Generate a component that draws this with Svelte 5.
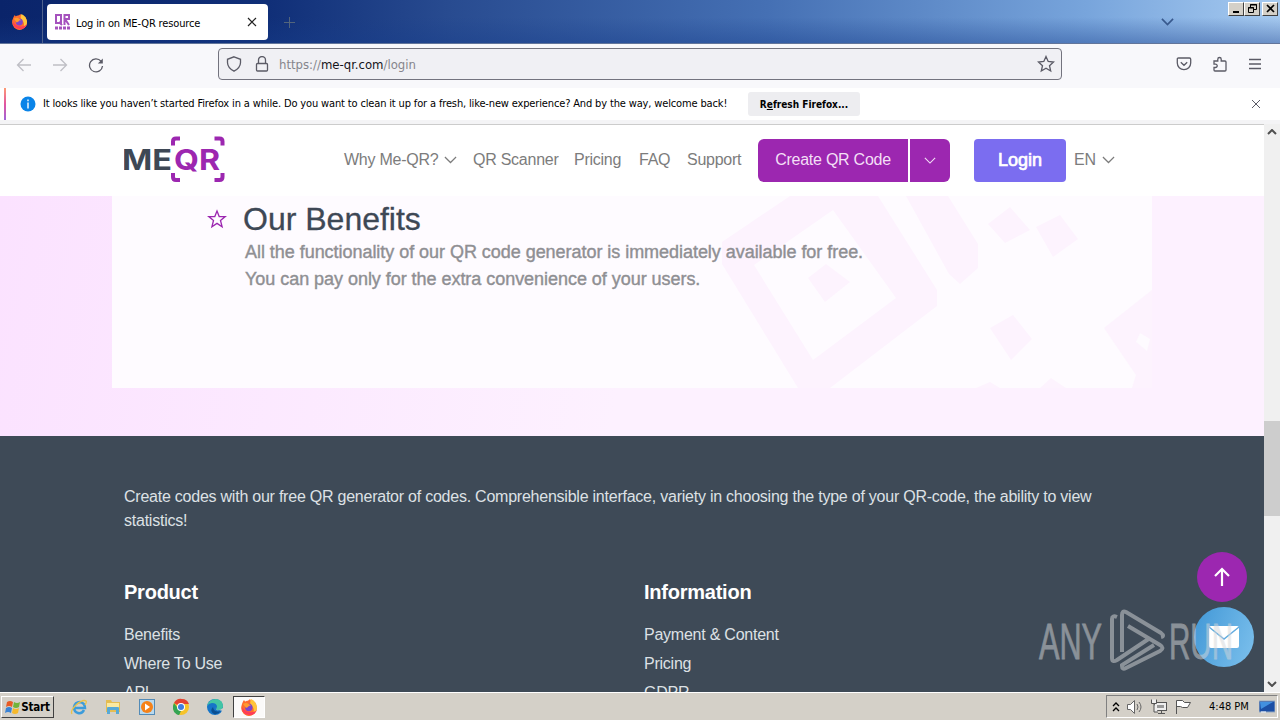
<script lang="ts">
    const navLinks = ['QR Scanner', 'Pricing', 'FAQ', 'Support']
    const productLinks = ['Benefits', 'Where To Use', 'API']
    const infoLinks = ['Payment & Content', 'Pricing', 'GDPR']
</script>

{#snippet chevron(size: number)}
    <svg class="chevron" width={size} height={size / 2 + 1} viewBox="0 0 14 8"><path d="M1 1l6 6 6-6" /></svg>
{/snippet}

{#snippet firefox(size: number)}
    <svg width={size} height={size} viewBox="0 0 18 18">
        <circle cx="9" cy="10" r="7.6" fill="#ff7139" />
        <path d="M2 6Q3 3 4 2l2 3 4-4q1 3 4 5l1-2q4 8-1 12-5 4-10 0-4-4-2-10z" fill="#ff6b2c" />
        <path d="M11 1q5 2 6 8 0 5-4 7 2-5-1-8-3-2-1-7z" fill="#ffc53a" />
        <path d="M2 9q0 8 8 8 5 0 7-5-3 3-7 2-5 0-8-5z" fill="#ff3b58" />
        <circle cx="8.8" cy="9.5" r="3.7" fill="#7c45cc" />
        <path d="M3 6q3-2 6 0l2 2q-2-1-3 1l-2 1z" fill="#ff9a2e" />
    </svg>
{/snippet}

<div class="screen">
    <header class="titlebar">
        <div class="pinned">{@render firefox(17)}</div>
        <div class="tab">
            <svg width="16" height="16" viewBox="0 0 16 16" fill="none" stroke="#a552bd" stroke-width="2">
                <path d="M1 1h5v8H1zM4 8l3 3M9.500 11V1H14v4h-4l4 6" />
                <path d="M0 14h16" stroke-width="3" stroke-dasharray="3 1" />
            </svg>
            <span>Log in on ME-QR resource</span>
            <svg class="tab-close" width="10" height="10" viewBox="0 0 10 10"><path d="M1 1l8 8M9 1L1 9" stroke="#222" stroke-width="1.200" /></svg>
        </div>
        <svg class="new-tab" width="13" height="13" viewBox="0 0 13 13"><path d="M6.500 1v11M1 6.500h11" stroke="#53657c" /></svg>
        <div class="list-tabs">{@render chevron(13)}</div>
        <div class="win-buttons">
            <button aria-label="Minimize"><svg width="11" height="10"><path d="M2 8h6" stroke="#000" stroke-width="2" /></svg></button>
            <button aria-label="Restore"><svg width="11" height="10" fill="none" stroke="#000"><path d="M3.500 3V.5h6v5H7M3 1h7M1.500 3.500h5v5h-5zM1 4h6" /></svg></button>
            <button class="close" aria-label="Close"><svg width="11" height="10"><path d="M2 1l7 7M9 1L2 8" stroke="#000" stroke-width="1.700" /></svg></button>
        </div>
    </header>

    <div class="toolbar">
        <div class="history">
            <svg class="dim" width="16" height="16" viewBox="0 0 16 16"><path d="M15 8H1.500M7.500 2l-6 6 6 6" /></svg>
            <svg class="dim" width="16" height="16" viewBox="0 0 16 16"><path d="M1 8h13.500M8.500 2l6 6-6 6" /></svg>
            <svg width="16" height="16" viewBox="0 0 16 16"><path d="M13 4.200A6.500 6.500 0 1 0 14.500 9" /><path d="M14.800 1.500v5h-5z" fill="#5b5b66" stroke="none" /></svg>
        </div>
        <div class="urlbar">
            <svg width="16" height="16" viewBox="0 0 16 16"><path d="M8 .8l6.500 2.500v3.500Q14.300 12 8 15.200 1.700 12 1.500 6.800V3.300z" /></svg>
            <svg class="lock" width="14" height="16" viewBox="0 0 14 16"><path d="M2.500 7.500h9q1 0 1 1V14q0 1-1 1h-9q-1 0-1-1V8.500q0-1 1-1zM3.500 7.500V4a3.500 3.500 0 0 1 7 0v3.500" /></svg>
            <span class="url">https://<b>me-qr.com</b>/login</span>
            <svg class="bookmark" width="18" height="18" viewBox="0 0 18 18"><path d="M9 1.500l2.200 5 5.300.5-4 3.700 1.200 5.300L9 13.300 4.300 16l1.200-5.300-4-3.700 5.300-.5z" /></svg>
        </div>
        <div class="tools">
            <svg width="16" height="16" viewBox="0 0 16 16"><path d="M2.500 2h11q1.200 0 1.200 1.200V7a6.700 6.700 0 0 1-13.400 0V3.200Q1.300 2 2.500 2zM4.800 6.300L8 9.300l3.200-3" /></svg>
            <svg width="16" height="16" viewBox="0 0 16 16"><path d="M2 5h3.800V3.200a1.700 1.700 0 0 1 3.400 0V5H13q1 0 1 1v8q0 1-1 1H3q-1 0-1-1v-2.500h1.500a1.700 1.700 0 0 0 0-3.400H2z" /></svg>
            <svg width="14" height="14" viewBox="0 0 14 14"><path d="M1 2.500h12M1 7h12M1 11.500h12" /></svg>
        </div>
    </div>

    <div class="notice">
        <svg width="16" height="16" viewBox="0 0 16 16"><circle cx="8" cy="8" r="7.500" fill="#0a84e8" /><path d="M8 3.500v1.700M8 6.500v6" stroke="#fff" stroke-width="1.400" /></svg>
        <span class="message">It looks like you haven’t started Firefox in a while. Do you want to clean it up for a fresh, like-new experience? And by the way, welcome back!</span>
        <button>R<u>e</u>fresh Firefox...</button>
        <svg class="dismiss" width="10" height="10" viewBox="0 0 10 10"><path d="M1 1l8 8M9 1L1 9" stroke="#5b5b66" /></svg>
    </div>

    <div class="viewport">
        <div class="page">
            <nav>
                <svg class="logo" width="102" height="48" viewBox="0 0 102 48">
                    <text x="-2" y="34" textLength="50" lengthAdjust="spacingAndGlyphs" fill="#3e4855">ME</text>
                    <text x="50" y="34" textLength="46" lengthAdjust="spacingAndGlyphs" fill="#9c27b0">QR</text>
                    <path d="M49 9.500V5.500q0-3 3-3H56M90.500 2.500h5q3 0 3 3v4M49 37v4q0 3 3 3H56M90.500 44h5q3 0 3-3v-4" fill="none" stroke="#9c27b0" stroke-width="4" />
                </svg>
                <a class="why" href="#why">Why Me-QR? {@render chevron(13)}</a>
                {#each navLinks as link}
                    <a class={link.slice(0, 2).toLowerCase()} href="#{link}">{link}</a>
                {/each}
                <button class="create">Create QR Code</button>
                <button class="create-more" aria-label="More">{@render chevron(12)}</button>
                <button class="login">Login</button>
                <a class="lang" href="#lang">EN {@render chevron(13)}</a>
            </nav>

            <main>
                <section class="benefits">
                    <svg class="pattern" width="452" height="192" viewBox="0 0 452 192">
                        <path fill-rule="evenodd" d="M90 0L22 46v22l76 124h32l107-82v-16L178 0zM133 14l63 88-83 62-59-95z" />
                        <path d="M206 0h42l30 48v24l-18 16-11-10zM310 11l20 23-25 13-17-19zM360 19l18 24-25 18-17-30zM126 68l24 18-25 20-17-24zM313 119l19 24-21 21-21-32z" />
                        <path fill-rule="evenodd" d="M452 94l-48 38 32 47-4 13h20zM440 137l10 6-3 12-11-9z" />
                        <path d="M276 192l14-6 10 6zM340 192l11-10 15 10z" />
                    </svg>
                    <h2>
                        <svg width="20" height="20" viewBox="0 0 20 20"><path d="M10 2l2.200 5.600h6l-4.700 3.900 1.600 6.300L10 14.400l-5.100 3.400 1.600-6.300-4.700-3.900h6z" /></svg>
                        <span>Our Benefits</span>
                    </h2>
                    <p>All the functionality of our QR code generator is immediately available for free.<br />You can pay only for the extra convenience of your users.</p>
                </section>
            </main>

            <footer>
                <p>Create codes with our free QR generator of codes. Comprehensible interface, variety in choosing the type of your QR-code, the ability to view<br />statistics!</p>
                <div class="columns">
                    <div>
                        <h3>Product</h3>
                        {#each productLinks as link}<a href="#{link}">{link}</a>{/each}
                    </div>
                    <div>
                        <h3>Information</h3>
                        {#each infoLinks as link}<a href="#{link}">{link}</a>{/each}
                    </div>
                </div>
            </footer>

            <div class="floating">
                <button class="up" aria-label="Up"><svg width="20" height="22" viewBox="0 0 20 22"><path d="M10 20V3M3 10l7-7 7 7" fill="none" stroke="#fff" stroke-width="2.200" /></svg></button>
                <button class="mail" aria-label="Mail"><svg width="32" height="24" viewBox="0 0 32 24"><rect x="1" y="1" width="30" height="22" rx="2" fill="#fff" /><path d="M1 2l15 12L31 2" fill="none" stroke="#60ace0" stroke-width="1.500" /></svg></button>
            </div>

            <svg class="watermark" width="200" height="66" viewBox="0 0 200 66">
                <text x="1" y="51" textLength="63" lengthAdjust="spacingAndGlyphs">ANY</text>
                <text x="131" y="51" textLength="64" lengthAdjust="spacingAndGlyphs">RUN</text>
                <path d="M79 9q-5-2-5 2v39q0 5 5 2l33-22M84 44V7q0-5 4-3l35 21q4 3 0 4M90 18l32 19q5 3 0 6L88 60q-4 2-4-2v-1l32-20" />
            </svg>
        </div>

        <div class="scrollbar">
            <svg width="10" height="6" viewBox="0 0 10 6"><path d="M1 5l4-4 4 4" /></svg>
            <div class="thumb"></div>
            <svg width="10" height="6" viewBox="0 0 10 6"><path d="M1 1l4 4 4-4" /></svg>
        </div>
    </div>

    <div class="taskbar">
        <button class="start">
            <svg width="16" height="16" viewBox="0 0 16 16"><path d="M2 3q3-2 6 0L7 8Q4 6 1 8z" fill="#e85b25" /><path d="M9 3q3 2 6 0l-1 5q-3 2-6 0z" fill="#72b43a" /><path d="M1 9q3-2 6 0l-1 5q-3-2-6 0z" fill="#3a83d5" /><path d="M8 9q3 2 6 0l-1 5q-3 2-6 0z" fill="#f6b92b" /></svg>
            Start
        </button>
        <div class="launchers">
            <svg width="18" height="18" viewBox="0 0 18 18" fill="none"><path d="M14 12q-2 4-6 3-4-1-4-6 1-5 6-5 5 1 5 6H5" stroke="#3c9cdb" stroke-width="2.500" /><path d="M2 16Q0 13 6 7q7-6 10-4 1 1-1 4" stroke="#eac248" stroke-width="1.300" /></svg>
            <svg width="18" height="18" viewBox="0 0 18 18"><path d="M2 2h5l1 2h8v10H2z" fill="#e5bd52" /><path d="M3 5h12v5H3z" fill="#fbe9a0" /><path d="M3 16v-6q0-1 1-1h10q1 0 1 1v6h-3v-4H6v4z" fill="#58a9d6" /></svg>
            <svg width="18" height="18" viewBox="0 0 18 18"><rect x="1.500" y="1.500" width="15" height="15" fill="#b9d9ee" stroke="#538bb7" /><circle cx="9" cy="9" r="6" fill="#f58219" /><path d="M7 5.500l5 3.500-5 3.500z" fill="#fff" /></svg>
            <svg width="18" height="18" viewBox="0 0 18 18"><circle cx="9" cy="9" r="8" fill="#f6c329" /><path d="M9 9L2 5q3-5 8-4 5 0 7 5H9z" fill="#e34234" /><path d="M2 5l6 8-1 4Q0 15 1 8z" fill="#35a453" /><path d="M6 11l3 2-2 4-3-1z" fill="#35a453" /><circle cx="9" cy="9" r="4" fill="#fff" /><circle cx="9" cy="9" r="3" fill="#3f7de0" /></svg>
            <svg width="18" height="18" viewBox="0 0 18 18"><circle cx="9" cy="9" r="8" fill="#1675c8" /><path d="M1 8q2-7 9-7 7 1 7 7 0 4-5 4-3 0-1-3 0-4-5-4-3 0-5 3z" fill="#43c5a4" /><path d="M7 9q1 6 8 4-3 4-7 3-5-3-1-7z" fill="#0b4f91" /><path d="M10 9q-1 4 3 3l4 1v-3q-2 2-5 2-3 0-2-3z" fill="#d4d0c8" /></svg>
        </div>
        <div class="running">{@render firefox(18)}</div>
        <div class="tray">
            <svg width="8" height="12" viewBox="0 0 8 12" fill="none" stroke="#000" stroke-width="1.300"><path d="M1 5l3-3 3 3M1 10l3-3 3 3" /></svg>
            <svg width="18" height="16" viewBox="0 0 18 16" fill="none" stroke="#666"><path d="M1.500 5.500h3l4-4v13l-4-4h-3z" fill="#fff" /><path d="M11 5q2 3 0 6M13 3q4 5 0 10" /></svg>
            <svg width="18" height="16" viewBox="0 0 18 16" fill="#eee" stroke="#555"><rect x="4.500" y="3.500" width="12" height="8" /><rect x="7" y="6" width="7" height="3" fill="#999" stroke="none" /><path d="M8 14.500h7M11.500 12v2M1.500.5v4h5v-4M4 5v8h4" /></svg>
            <svg width="18" height="16" viewBox="0 0 18 16" fill="#fff" stroke="#555"><path d="M2.500 15V1.500h6l2 2h6l-3 5h-5l-2-1h-4" /></svg>
            <span>4:48 PM</span>
            <svg width="16" height="14" viewBox="0 0 16 14"><rect width="16" height="11" y="1" fill="#1c4fa5" stroke="#95aac2" /><path d="M1 2h13L2 9z" fill="#4290e0" /><path d="M2 12h5" stroke="#fff" /></svg>
        </div>
    </div>
</div>

<style>
    .screen {
        width: 1280px;
        height: 720px;
        display: flex;
        flex-direction: column;
        overflow: hidden;
        font-family: "DejaVu Sans Condensed", "DejaVu Sans", sans-serif;
        font-size: 11px;
        background: #fff;
    }

    svg {
        display: block;
        flex: none;
    }

    button {
        border: 0;
        padding: 0;
        font: inherit;
        letter-spacing: inherit;
        display: flex;
        align-items: center;
        justify-content: center;
        flex: none;
    }

    a {
        color: inherit;
        text-decoration: none;
    }

    .chevron {
        fill: none;
        stroke: currentColor;
        stroke-width: 1.3;
    }

    .titlebar {
        height: 44px;
        flex: none;
        display: flex;
        background: linear-gradient(#ffffff00 40%, #173d8a66), linear-gradient(90deg, #0a246a 0, #102f78 21%, #284b90 35%, #4570b4 60%, #78a5dc 85%, #a6caf0);
        border-bottom: 1px solid #62759a;
        box-sizing: border-box;
    }

    .pinned {
        width: 42px;
        border-right: 1px solid #4f628e;
        display: flex;
        align-items: center;
        justify-content: center;
        padding-bottom: 1px;
    }

    .pinned :global(svg) {
        margin-right: 3px;
    }

    .tab {
        width: 221px;
        margin: 4px 0 3px 4px;
        box-sizing: border-box;
        padding: 0 11px 0 8px;
        display: flex;
        align-items: center;
        gap: 5px;
        border-radius: 4px;
        background: #fff;
        white-space: nowrap;
        letter-spacing: -0.15px;
    }

    .tab span {
        padding-top: 2px;
    }

    .tab-close {
        margin-left: auto;
    }

    .new-tab {
        margin: 16px 0 0 15px;
    }

    .list-tabs {
        margin: 18px 0 0 auto;
        color: #38598d;
    }

    .list-tabs .chevron {
        stroke-width: 1.8;
    }

    .win-buttons {
        display: flex;
        margin: 2px 2px 0 54px;
    }

    .win-buttons button {
        width: 16px;
        height: 14px;
        background: #d4d0c8;
        border: 1px solid;
        border-color: #fff #404040 #404040 #fff;
        box-sizing: border-box;
    }

    .win-buttons .close {
        margin-left: 2px;
    }

    .toolbar {
        height: 44px;
        flex: none;
        display: flex;
        align-items: center;
        background: #f8f8fb;
        padding: 0 0 4px 16px;
        box-sizing: border-box;
    }

    .toolbar svg {
        fill: none;
        stroke: #5b5b66;
        stroke-width: 1.3;
    }

    .history {
        display: flex;
        gap: 20px;
        width: 202px;
        padding-top: 2px;
    }

    .toolbar .dim {
        stroke: #bfbfc5;
    }

    .urlbar {
        width: 844px;
        height: 32px;
        box-sizing: border-box;
        border: 1px solid #73737e;
        border-radius: 4px;
        background: #f0f0f4;
        display: flex;
        align-items: center;
        padding: 0 6px 0 7px;
    }

    .lock {
        margin: 0 10px 0 13px;
    }

    .url {
        font-size: 13px;
        color: #85858c;
    }

    .url b {
        font-weight: 400;
        color: #15141a;
    }

    .bookmark {
        margin-left: auto;
    }

    .tools {
        margin-left: 114px;
        display: flex;
        align-items: center;
        gap: 20px;
    }

    .notice {
        height: 32px;
        flex: none;
        display: flex;
        align-items: center;
        margin: 0 4px;
        padding: 0 15px 0 14px;
        border-left: 2px solid;
        border-image: linear-gradient(#ff9f72, #e255a0, #9a65dc) 1;
    }

    .message {
        margin-left: 7px;
        width: 705px;
        padding-bottom: 2px;
        white-space: nowrap;
        letter-spacing: -0.147px;
    }

    .notice button {
        width: 112px;
        height: 24px;
        border-radius: 3px;
        background: #ededf0;
        font-size: 10px;
        font-weight: 700;
        display: block;
    }

    .dismiss {
        margin-left: auto;
    }

    .viewport {
        flex: none;
        height: 568px;
        display: flex;
        border-top: 4px solid #f4f4f6;
        box-shadow: inset 0 1px #ccc;
    }

    .page {
        width: 1264px;
        position: relative;
        overflow: hidden;
        font-family: "Liberation Sans", Arial, sans-serif;
        display: flex;
        flex-direction: column;
    }

    nav {
        height: 72px;
        flex: none;
        box-sizing: border-box;
        display: flex;
        align-items: center;
        padding-left: 124px;
        color: #7c7c7c;
        font-size: 16px;
        letter-spacing: -0.25px;
        white-space: nowrap;
    }

    nav a {
        display: flex;
        align-items: center;
        gap: 6px;
        flex: none;
    }

    .logo text {
        font: 700 29px Inter, sans-serif;
        letter-spacing: 0;
    }

    .why {
        width: 129px;
        margin-left: 118px;
    }

    .qr {
        width: 101px;
    }

    .pr {
        width: 65px;
    }

    .fa {
        width: 48px;
    }

    .su {
        width: 71px;
    }

    .create,
    .create-more {
        height: 43px;
        background: #9c27b0;
        color: #f3dff6;
    }

    .create {
        width: 150px;
        border-radius: 6px 0 0 6px;
    }

    .create-more {
        width: 40px;
        margin-left: 2px;
        border-radius: 0 6px 6px 0;
    }

    .login {
        width: 92px;
        height: 43px;
        margin: 0 8px 0 24px;
        border-radius: 4px;
        background: #7b6df0;
        color: #fff;
        font-size: 18px;
        letter-spacing: 0;
        -webkit-text-stroke: 0.7px;
    }

    main {
        height: 240px;
        flex: none;
        background: linear-gradient(100deg, #fbe2ff, #fdf1ff 50%);
        padding: 0 112px;
    }

    .benefits {
        height: 192px;
        position: relative;
        background: #fefbff;
        overflow: hidden;
    }

    .pattern {
        position: absolute;
        right: 0;
        top: 0;
        fill: #fdf3fe;
    }

    h2 {
        position: relative;
        margin: 0;
        padding: 4px 0 0 95px;
        display: flex;
        align-items: center;
        gap: 16px;
        font-size: 32px;
        line-height: 38px;
        font-weight: 400;
        color: #3e4855;
    }

    h2 span {
        -webkit-text-stroke: 0.3px;
    }

    h2 svg {
        fill: none;
        stroke: #9c27b0;
        stroke-width: 1.3;
    }

    .benefits p {
        position: relative;
        margin: 0;
        padding: 1px 0 0 133px;
        font-size: 18px;
        line-height: 27px;
        letter-spacing: -0.04px;
        color: #8f8f93;
        -webkit-text-stroke: 0.4px;
    }

    footer {
        flex: none;
        padding: 49px 124px 0;
        height: 208px;
        background: #3e4a57;
        color: #dde1e5;
        font-size: 16px;
        letter-spacing: -0.235px;
    }

    footer p {
        margin: 0;
        line-height: 24px;
        white-space: nowrap;
    }

    .columns {
        display: flex;
        margin-top: 47px;
    }

    .columns div {
        width: 520px;
        flex: none;
    }

    h3 {
        margin: 0 0 15px;
        font-size: 20px;
        line-height: 25px;
        color: #fff;
    }

    .columns a {
        display: block;
        line-height: 29px;
    }

    .floating {
        position: absolute;
        left: 1194px;
        top: 428px;
        display: flex;
        flex-direction: column;
        align-items: center;
        gap: 5px;
    }

    .floating button {
        border-radius: 50%;
    }

    .up {
        width: 50px;
        height: 50px;
        margin-right: 4px;
        background: #9c27b0;
    }

    .mail {
        width: 60px;
        height: 60px;
        background: linear-gradient(110deg, #4197d6, #7dc1ed);
    }

    .watermark {
        position: absolute;
        left: 1038px;
        top: 484px;
        opacity: 0.5;
    }

    .watermark text {
        font: 50px "Liberation Sans", sans-serif;
        fill: #d5d7d9;
        stroke: #d5d7d9;
        stroke-width: 0.8;
    }

    .watermark path {
        fill: none;
        stroke: #d5d7d9;
        stroke-width: 4;
    }

    .scrollbar {
        width: 16px;
        background: #f0f0f0;
        display: flex;
        flex-direction: column;
        align-items: center;
        justify-content: space-between;
        padding: 5px 0;
        box-sizing: border-box;
    }

    .scrollbar svg {
        fill: none;
        stroke: #505050;
        stroke-width: 2;
    }

    .thumb {
        width: 16px;
        height: 95px;
        margin-top: 280px;
        margin-bottom: 160px;
        background: #cdcdcd;
    }

    .taskbar {
        height: 28px;
        flex: none;
        box-sizing: border-box;
        border-top: 1px solid #fff;
        background: #d4d0c8;
        display: flex;
        align-items: center;
        padding: 2px 2px 2px 1px;
    }

    .start {
        width: 53px;
        height: 22px;
        font-size: 11.5px;
        font-weight: 700;
        letter-spacing: -0.2px;
        background: #d4d0c8;
        border: 1px solid;
        border-color: #fff #404040 #404040 #fff;
        box-sizing: border-box;
    }

    .launchers {
        display: flex;
        gap: 16px;
        margin-left: 16px;
    }

    .running {
        width: 32px;
        height: 22px;
        margin-left: 9px;
        border: 1px solid;
        border-color: #404040 #fff #fff #404040;
        box-sizing: border-box;
        background: #fbfaf9;
        display: flex;
        align-items: center;
        justify-content: center;
    }

    .tray {
        width: 172px;
        height: 23px;
        margin-left: auto;
        padding: 0 2px 0 5px;
        border: 1px solid;
        border-color: #808080 #fff #fff #808080;
        box-sizing: border-box;
        display: flex;
        align-items: center;
        gap: 6px;
    }

    .tray span {
        margin: 0 4px 0 11px;
        width: 42px;
        white-space: nowrap;
    }
</style>
